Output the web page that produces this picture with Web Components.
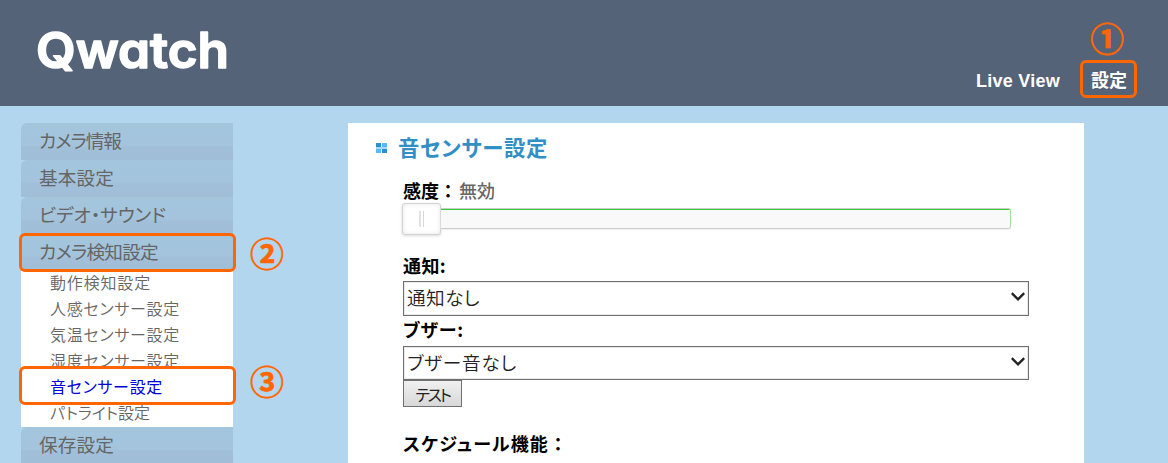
<!DOCTYPE html>
<html lang="ja">
<head>
<meta charset="utf-8">
<title>Qwatch</title>
<style>
    body {
        margin: 0;
        height: 463px;
        overflow: hidden;
        background: #b2d6ee;
        font-family: 'Liberation Sans', 'Noto Sans CJK JP', sans-serif;
    }
</style>
</head>
<body>
<qwatch-page></qwatch-page>

<script>
// Text that spreads its letters so that it takes a given width
class FitText extends HTMLElement {

    constructor() {
        super();
        this.shadow = this.attachShadow({ mode: 'open' });
    }

    connectedCallback() {
        this.shadow.innerHTML =
        `
        <style>
            :host {
                display: inline-block;
                white-space: nowrap;
                font-feature-settings: 'palt';
            }
            :host([full]) {
                font-feature-settings: normal;
            }
        </style>
        <span><slot></slot></span>
        `;

        let span = this.shadow.querySelector('span');
        let width = parseFloat(this.getAttribute('width'));
        let count = this.textContent.length;
        span.style.letterSpacing = (width - span.getBoundingClientRect().width) / count + 'px';
    }

}

class PageHeader extends HTMLElement {

    constructor() {
        super();
        this.shadow = this.attachShadow({ mode: 'open' });
    }

    connectedCallback() {
        this.shadow.innerHTML =
        `
        <style>
            :host {
                display: flex;
                justify-content: space-between;
                box-sizing: border-box;
                height: 106px;
                padding: 0 41px 0 36px;
                background: #556379;
                color: #fff;
            }
            svg {
                margin-top: 20px;
            }
            text {
                font: 600 50px Inter, sans-serif;
                font-feature-settings: 'cv11';
                fill: #fff;
                stroke: #fff;
                stroke-width: 1.6;
                stroke-linejoin: round;
            }
            nav {
                display: flex;
                gap: 31px;
                margin-top: 67px;
                font-size: 18px;
                font-weight: bold;
                line-height: 28px;
            }
            .ajustes {
                font-family: 'Noto Sans CJK JP', sans-serif;
                line-height: 24px;
            }
        </style>

        <svg width="200" height="60">
            <text x="0" y="48" textLength="193" lengthAdjust="spacingAndGlyphs">Qwatch</text>
        </svg>
        <nav>
            <fit-text width="84">Live View</fit-text>
            <fit-text class="ajustes" width="36">設定</fit-text>
        </nav>
        `;
    }

}

class MenuItem extends HTMLElement {

    constructor() {
        super();
        this.shadow = this.attachShadow({ mode: 'open' });
    }

    connectedCallback() {
        this.shadow.innerHTML =
        `
        <style>
            :host {
                display: block;
                box-sizing: border-box;
                height: 37px;
                padding-left: 18px;
                border-top-left-radius: 6px;
                background: linear-gradient(#a4c6dd 0, #a3c4dc 22px, #a1bfd8 24px, #a0bed8 100%);
                color: #666;
                font: 18.67px/34px 'Noto Sans CJK JP', sans-serif;
            }
            :host([sub]) {
                height: 26px;
                padding-left: 29px;
                border-radius: 0;
                background: #fff;
                font-size: 16px;
                font-weight: 350;
                line-height: 22px;
            }
            :host([active]) {
                color: #00d;
                font-weight: 400;
            }
        </style>
        <fit-text width="${this.getAttribute('width')}">${this.getAttribute('text')}</fit-text>
        `;
    }

}

class SideMenu extends HTMLElement {

    constructor() {
        super();
        this.shadow = this.attachShadow({ mode: 'open' });
    }

    connectedCallback() {
        this.shadow.innerHTML =
        `
        <style>
            :host {
                display: block;
                width: 212px;
            }
        </style>
        <menu-item text="カメラ情報" width="82"></menu-item>
        <menu-item text="基本設定" width="75"></menu-item>
        <menu-item text="ビデオ・サウンド" width="127"></menu-item>
        <menu-item text="カメラ検知設定" width="119"></menu-item>
        <menu-item sub text="動作検知設定" width="101"></menu-item>
        <menu-item sub text="人感センサー設定" width="130"></menu-item>
        <menu-item sub text="気温センサー設定" width="130"></menu-item>
        <menu-item sub text="湿度センサー設定" width="130"></menu-item>
        <menu-item sub active text="音センサー設定" width="113"></menu-item>
        <menu-item sub text="パトライト設定" width="100"></menu-item>
        <menu-item text="保存設定" width="75"></menu-item>
        `;
    }

}

class SliderBar extends HTMLElement {

    constructor() {
        super();
        this.shadow = this.attachShadow({ mode: 'open' });
    }

    connectedCallback() {
        this.shadow.innerHTML =
        `
        <style>
            :host {
                display: flex;
                align-items: flex-start;
                width: 609px;
                height: 32px;
                margin-left: -1px;
            }
            .tirador {
                display: flex;
                justify-content: center;
                align-items: center;
                gap: 2px;
                box-sizing: border-box;
                width: 39px;
                height: 32px;
                border: 1px solid #d3d3d3;
                border-radius: 3px;
                background: #fff;
                box-shadow: inset 0 0 5px #e8e8e8, 0 1px 3px rgba(0, 0, 0, .15);
            }
            .tirador i {
                width: 1px;
                height: 16px;
                background: #d8d8d8;
            }
            .tirador i:first-child {
                width: 2px;
                background: #e2e2e2;
            }
            .barra {
                flex: 1;
                box-sizing: border-box;
                height: 21px;
                margin-top: 5px;
                border: 1px solid #ccc;
                border-left: 0;
                border-right-color: #a5dca5;
                border-radius: 0 3px 3px 0;
                background: linear-gradient(#3c3 1px, #f9f9f9 1px);
                box-shadow: 0 1px 2px #eee;
            }
        </style>
        <div class="tirador"><i></i><i></i></div>
        <div class="barra"></div>
        `;
    }

}

class SelectBox extends HTMLElement {

    constructor() {
        super();
        this.shadow = this.attachShadow({ mode: 'open' });
    }

    connectedCallback() {
        this.shadow.innerHTML =
        `
        <style>
            :host {
                display: flex;
                justify-content: space-between;
                box-sizing: border-box;
                width: 626px;
                height: 35px;
                padding: 0 3px 0 3px;
                border: 1px solid #707070;
                box-shadow: inset 0 0 0 1px #eaeaea;
                color: #222;
                font: 350 18.67px/29px 'Noto Sans CJK JP', sans-serif;
            }
            svg {
                margin-top: 10px;
            }
        </style>
        <fit-text width="${this.getAttribute('width')}">${this.getAttribute('text')}</fit-text>
        <svg width="14" height="10" viewBox="0 0 14 10">
            <path d="M.8 1.2 L7 7.4 L13.2 1.2" fill="none" stroke="#222" stroke-width="2.4"/>
        </svg>
        `;
    }

}

class SensorPanel extends HTMLElement {

    constructor() {
        super();
        this.shadow = this.attachShadow({ mode: 'open' });
    }

    connectedCallback() {
        this.shadow.innerHTML =
        `
        <style>
            :host {
                display: block;
                box-sizing: border-box;
                width: 736px;
                height: 340px;
                padding: 10px 0 0 55px;
                background: #fff;
                color: #000;
                font: bold 18px/26px 'Noto Sans CJK JP', sans-serif;
            }
            h1 {
                display: flex;
                align-items: center;
                gap: 11px;
                height: 30px;
                margin: 0 0 14px -27px;
                color: #318fc6;
                font-size: 21.33px;
                line-height: 28px;
            }
            h1 fit-text {
                margin-top: -2px;
            }
            .fila {
                display: flex;
                height: 26px;
            }
            .valor {
                margin-left: 2px;
                color: #666;
                font-weight: 500;
            }
            slider-bar {
                margin-bottom: 17px;
            }
            .fila.aviso {
                height: 29px;
            }
            .fila.zumbador {
                height: 30px;
            }
            select-box.corto {
                height: 34px;
            }
            button {
                display: block;
                width: 59px;
                height: 27px;
                margin: 0 0 23px;
                padding: 0;
                border: 1px solid #707070;
                border-radius: 0;
                background: linear-gradient(#f0f0f0, #d8d8d8);
                color: #222;
                font: 16px/24px 'Noto Sans CJK JP', sans-serif;
            }
        </style>

        <h1>
            <svg width="11" height="10" shape-rendering="crispEdges">
                <rect width="5" height="4" fill="#2b8fd0"/>
                <rect x="6" width="5" height="4" fill="#5ab8ff"/>
                <rect y="4" width="11" height="2" fill="#a9d8fb"/>
                <rect y="6" width="5" height="4" fill="#5ab8ff"/>
                <rect x="6" y="6" width="5" height="4" fill="#2b8fd0"/>
            </svg>
            <fit-text width="150">音センサー設定</fit-text>
        </h1>
        <div class="fila">
            <fit-text full width="54">感度：</fit-text>
            <fit-text class="valor" width="36">無効</fit-text>
        </div>
        <slider-bar></slider-bar>
        <div class="fila aviso"><fit-text width="43">通知:</fit-text></div>
        <select-box text="通知なし" width="73"></select-box>
        <div class="fila zumbador"><fit-text width="61">ブザー:</fit-text></div>
        <select-box class="corto" text="ブザー音なし" width="110"></select-box>
        <button><fit-text width="34">テスト</fit-text></button>
        <div class="fila"><fit-text width="146">スケジュール機能</fit-text><fit-text full width="18">：</fit-text></div>
        `;
    }

}

// Orange frame or number laid over the page
class StepMark extends HTMLElement {

    constructor() {
        super();
        this.shadow = this.attachShadow({ mode: 'open' });
    }

    connectedCallback() {
        this.shadow.innerHTML =
        `
        <style>
            :host {
                position: absolute;
                box-sizing: border-box;
                color: #f60;
                font: 700 34px/38px 'Noto Sans CJK JP', sans-serif;
                -webkit-text-stroke: .6px #f60;
                text-align: center;
            }
            :host([frame]) {
                border: 3px solid #f60;
                border-radius: 6px;
            }
            :host(:not([frame])) {
                width: 40px;
                height: 40px;
            }
        </style>
        <slot></slot>
        `;
    }

}

class QwatchPage extends HTMLElement {

    constructor() {
        super();
        this.shadow = this.attachShadow({ mode: 'open' });
    }

    connectedCallback() {
        this.shadow.innerHTML =
        `
        <style>
            :host {
                display: block;
                position: relative;
                height: 463px;
                overflow: hidden;
            }
            main {
                display: flex;
                gap: 115px;
                padding: 17px 0 0 21px;
            }
        </style>
        <page-header></page-header>
        <main>
            <side-menu></side-menu>
            <sensor-panel></sensor-panel>
        </main>
        <step-mark frame style="left: 1080px; top: 60px; width: 57px; height: 38px"></step-mark>
        <step-mark frame style="left: 19px; top: 233px; width: 217px; height: 39px"></step-mark>
        <step-mark frame style="left: 19px; top: 366px; width: 217px; height: 39px"></step-mark>
        <step-mark style="left: 1087px; top: 19px">①</step-mark>
        <step-mark style="left: 247px; top: 234px">②</step-mark>
        <step-mark style="left: 247px; top: 362px">③</step-mark>
        `;
    }

}

customElements.define('fit-text', FitText);
customElements.define('page-header', PageHeader);
customElements.define('menu-item', MenuItem);
customElements.define('side-menu', SideMenu);
customElements.define('slider-bar', SliderBar);
customElements.define('select-box', SelectBox);
customElements.define('sensor-panel', SensorPanel);
customElements.define('step-mark', StepMark);
customElements.define('qwatch-page', QwatchPage);
</script>
</body>
</html>
